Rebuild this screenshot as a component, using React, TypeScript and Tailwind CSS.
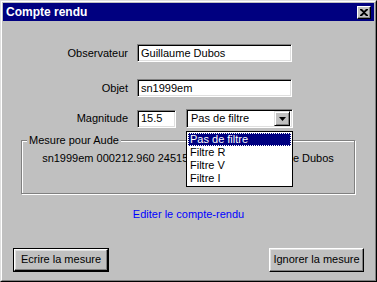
import type { ReactNode } from "react";

const sunken =
  "border border-t-[#808080] border-l-[#808080] border-b-white border-r-white shadow-[inset_1px_1px_0_#000,inset_-1px_-1px_0_#dfdfdf]";

function Field({ label, children }: { label: string; children: ReactNode }) {
  return (
    <div className="flex items-center">
      <div className="w-[125px] text-right pr-0">{label}</div>
      <div className="ml-[9px] flex items-center">{children}</div>
    </div>
  );
}

function TextBox({ value, width }: { value: string; width: string }) {
  return (
    <div className={`${sunken} ${width} h-[18px] bg-white pl-[3px] flex items-center leading-none`}>
      {value}
    </div>
  );
}

function Button({ children, primary }: { children: ReactNode; primary?: boolean }) {
  const inner = (
    <div className="h-full w-full border border-t-white border-l-white border-b-black border-r-black shadow-[inset_-1px_-1px_0_#808080,inset_1px_1px_0_#dfdfdf] flex items-center justify-center">
      {children}
    </div>
  );
  return primary ? (
    <div className="w-[96px] h-[24px] border border-black">{inner}</div>
  ) : (
    <div className="w-[95px] h-[24px]">{inner}</div>
  );
}

export default function App() {
  return (
    <div
      className="w-[377px] h-[282px] bg-[#c0c0c0] text-black text-[11px]"
      style={{ fontFamily: '"Liberation Sans", Arial, sans-serif' }}
    >
      <div className="h-full w-full border border-t-[#dfdfdf] border-l-[#dfdfdf] border-b-black border-r-black">
        <div className="h-full w-full border border-t-white border-l-white border-b-[#808080] border-r-[#808080] p-px flex flex-col">
          {/* title bar */}
          <div className="h-[18px] bg-[#000080] flex items-center justify-between pl-[3px] pr-[3px]">
            <span className="text-white font-bold text-[12px]">Compte rendu</span>
            <div className="w-[14px] h-[13px] bg-[#c0c0c0] border border-t-white border-l-white border-b-black border-r-black shadow-[inset_-1px_-1px_0_#808080] flex items-center justify-center">
              <svg width="8" height="7" viewBox="0 0 8 7">
                <path d="M0 0h2l2 2 2-2h2v1L5 3.5 8 6v1H6L4 5 2 7H0V6l3-2.5L0 1z" fill="#000" />
              </svg>
            </div>
          </div>

          {/* form */}
          <div className="mt-[23px] flex flex-col">
            <Field label="Observateur">
              <TextBox value="Guillaume Dubos" width="w-[155px]" />
            </Field>
            <div className="mt-[17px]">
              <Field label="Objet">
                <TextBox value="sn1999em" width="w-[155px]" />
              </Field>
            </div>
            <div className="mt-[12px] relative">
              <Field label="Magnitude">
                <TextBox value="15.5" width="w-[39px]" />
                <div className={`${sunken} ml-[10px] w-[107px] h-[19px] bg-white flex items-center justify-between pl-[4px] pr-[2px]`}>
                  <span>Pas de filtre</span>
                  <div className="w-[16px] h-[15px] bg-[#c0c0c0] border border-t-[#dfdfdf] border-l-[#dfdfdf] border-b-black border-r-black shadow-[inset_1px_1px_0_#fff,inset_-1px_-1px_0_#808080] flex items-center justify-center">
                    <svg width="7" height="4" viewBox="0 0 7 4">
                      <path d="M0 0h7L3.5 4z" fill="#000" />
                    </svg>
                  </div>
                </div>
              </Field>
              {/* open dropdown list */}
              <div className="absolute left-[183px] top-[22px] w-[107px] border border-black bg-white z-10 flex flex-col p-px">
                <div className="h-[13px] bg-[#000080] text-white pl-[2px] flex items-center outline-1 outline-dotted outline-white -outline-offset-1">
                  Pas de filtre
                </div>
                <div className="h-[13px] pl-[2px] flex items-center">Filtre R</div>
                <div className="h-[13px] pl-[2px] flex items-center">Filtre V</div>
                <div className="h-[13px] pl-[2px] flex items-center">Filtre I</div>
              </div>
            </div>

            {/* group box */}
            <div className="mt-[12px] ml-[18px] w-[334px] h-[54px] relative border border-[#808080] shadow-[inset_1px_1px_0_#fff,1px_1px_0_#fff]">
              <span className="absolute left-[5px] -top-[8px] bg-[#c0c0c0] px-[2px] leading-[14px]">
                Mesure pour Aude
              </span>
              <div className="mt-[9px] text-center whitespace-nowrap">
                sn1999em 000212.960 2451586.960 15.5 Guillaume Dubos
              </div>
            </div>

            <div className="mt-[12px] text-center text-[#0000ff]">Editer le compte-rendu</div>

            <div className="mt-[25px] flex justify-between pl-[10px] pr-[10px]">
              <Button primary>Ecrire la mesure</Button>
              <Button>Ignorer la mesure</Button>
            </div>
          </div>
        </div>
      </div>
    </div>
  );
}
